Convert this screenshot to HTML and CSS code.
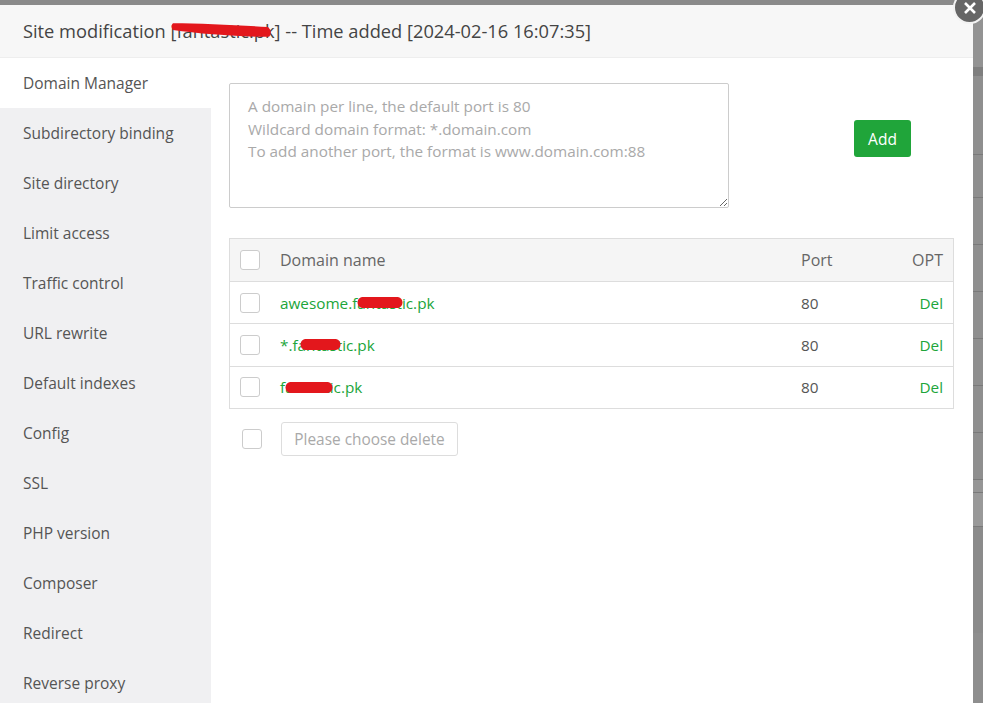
FILE: index.html
```html
<!DOCTYPE html>
<html lang="en">
<head>
<meta charset="utf-8">
<title>Site modification</title>
<link rel="stylesheet" href="styles.css">
</head>
<body>
<div class="page">
  <div class="topband"></div>
  <div class="stage">
    <main class="modal">
      <header class="modal-head">Site modification <span class="redact-wrap">[fantastic.pk]<svg class="scribble title-scribble" viewBox="0 0 104 14"><path d="M2 0 C30 0 70 2 100 4 Q105 9 101 14 C70 14 30 11 2 7 Q-1 3 2 0 Z"/></svg></span> -- Time added [2024-02-16 16:07:35]</header>
      <div class="modal-body">
        <nav class="side">
          <a class="side-item active">Domain Manager</a>
          <a class="side-item">Subdirectory binding</a>
          <a class="side-item">Site directory</a>
          <a class="side-item">Limit access</a>
          <a class="side-item">Traffic control</a>
          <a class="side-item">URL rewrite</a>
          <a class="side-item">Default indexes</a>
          <a class="side-item">Config</a>
          <a class="side-item">SSL</a>
          <a class="side-item">PHP version</a>
          <a class="side-item">Composer</a>
          <a class="side-item">Redirect</a>
          <a class="side-item">Reverse proxy</a>
        </nav>
        <section class="content">
          <div class="add-row">
            <textarea class="domains" placeholder="A domain per line, the default port is 80
Wildcard domain format: *.domain.com
To add another port, the format is www.domain.com:88"></textarea>
            <button class="btn-add">Add</button>
          </div>
          <div class="table">
            <div class="row head">
              <span class="cell-check"><i class="check"></i></span>
              <span class="cell-name">Domain name</span>
              <span class="cell-port">Port</span>
              <span class="cell-opt">OPT</span>
            </div>
            <div class="row">
              <span class="cell-check"><i class="check"></i></span>
              <span class="cell-name link"><span class="redact-wrap">awesome.fantastic.pk<svg class="scribble s1" viewBox="0 0 46 11"><path d="M5 0 H41 C47 1 47 10 41 11 H5 C-1 10 -1 1 5 0 Z"/></svg></span></span>
              <span class="cell-port">80</span>
              <span class="cell-opt link">Del</span>
            </div>
            <div class="row">
              <span class="cell-check"><i class="check"></i></span>
              <span class="cell-name link"><span class="redact-wrap">*.fantastic.pk<svg class="scribble s2" viewBox="0 0 41 11"><path d="M5 0 H36 C42 1 42 10 36 11 H5 C-1 10 -1 1 5 0 Z"/></svg></span></span>
              <span class="cell-port">80</span>
              <span class="cell-opt link">Del</span>
            </div>
            <div class="row">
              <span class="cell-check"><i class="check"></i></span>
              <span class="cell-name link"><span class="redact-wrap">fantastic.pk<svg class="scribble s3" viewBox="0 0 48 11"><path d="M5 0 H43 C49 1 49 10 43 11 H5 C-1 10 -1 1 5 0 Z"/></svg></span></span>
              <span class="cell-port">80</span>
              <span class="cell-opt link">Del</span>
            </div>
          </div>
          <div class="table-foot">
            <i class="check"></i>
            <button class="btn-del" disabled>Please choose delete</button>
          </div>
        </section>
      </div>
    </main>
    <aside class="backdrop">
      <div class="bd bd1"></div><div class="bd bd2"></div><div class="bd bd3"></div>
      <div class="bd bd4"></div><div class="bd bd5"></div><div class="bd bd5"></div>
      <div class="bd bd5"></div><div class="bd bd5"></div><div class="bd bd5"></div>
      <div class="bd bd5"></div><div class="bd bd6"></div><div class="bd bd7"></div>
      <div class="bd bd8"></div>
    </aside>
  </div>
  <button class="close" aria-label="Close"><svg viewBox="0 0 14 14"><path d="M2 2 L12 12 M12 2 L2 12"/></svg></button>
</div>
</body>
</html>
```

FILE: styles.css
```css
* { box-sizing: border-box; }
html, body { margin: 0; height: 100%; overflow: hidden; }
body { font-family: "Open Sans", "Noto Sans", sans-serif; color: #555; background: #8e8e8e; }
.page { position: relative; width: 983px; height: 703px; display: flex; flex-direction: column; overflow: hidden; }
.topband { height: 5px; background: #8a8a8a; flex: none; }
.stage { flex: 1; display: flex; min-height: 0; }
.modal { width: 973px; background: #fff; display: flex; flex-direction: column; flex: none; }
.modal-head { height: 53px; flex: none; padding-left: 23px; background: #f7f7f7; border-bottom: 1px solid #eee; font-size: 18.25px; line-height: 52px; color: #444; white-space: nowrap; }
.redact-wrap { position: relative; display: inline-block; }
.scribble { position: absolute; fill: #e3171c; }
.title-scribble { left: 1px; top: 18px; width: 101px; height: 14px; }
.s1 { left: 77px; top: 4px; width: 46px; height: 11px; }
.s2 { left: 20px; top: 4px; width: 41px; height: 11px; }
.s3 { left: 5px; top: 5px; width: 48px; height: 11px; }
.modal-body { flex: 1; display: flex; min-height: 0; }
.side { width: 211px; flex: none; background: #f0f0f2; }
.side-item { display: block; height: 50px; line-height: 51px; padding-left: 23px; font-size: 15.5px; color: #555; }
.side-item.active { background: #fff; }
.content { flex: 1; padding: 25px 19px 0 18px; }
.add-row { display: flex; align-items: flex-start; height: 125px; }
.domains { width: 500px; height: 125px; margin: 0; padding: 11px 18px; border: 1px solid #ccc; border-radius: 2px; font: 15.3px/22.5px "Open Sans", "Noto Sans", sans-serif; outline: none; }
.domains::placeholder { color: #a9a9a9; opacity: 1; }
.btn-add { margin: 37px 0 0 125px; width: 57px; height: 37px; padding: 0; background: #20a53a; border: 0; border-radius: 3px; color: #fff; font: 15.5px "Open Sans", "Noto Sans", sans-serif; }
.table { margin-top: 30px; width: 725px; border: 1px solid #ddd; }
.row { display: flex; align-items: center; height: 42.4px; border-top: 1px solid #ddd; font-size: 15.3px; }
.row.head { height: 42px; border-top: 0; background: #f5f5f5; font-size: 16px; color: #666; }
.cell-check { width: 50px; padding-left: 10px; display: flex; flex: none; }
.cell-name { width: 521px; flex: none; }
.cell-port { width: 80px; flex: none; }
.cell-opt { flex: 1; text-align: right; padding-right: 10px; }
.link { color: #20a53a; }
.check { display: block; width: 20px; height: 20px; flex: none; border: 1px solid #ccc; border-radius: 3px; background: #fff; }
.table-foot { display: flex; align-items: center; margin-top: 13px; padding-left: 13px; gap: 19px; }
.btn-del { width: 177px; height: 34px; padding: 0; background: #fff; border: 1px solid #ddd; border-radius: 3px; color: #a9a9a9; font: 15.4px "Open Sans", "Noto Sans", sans-serif; }
.backdrop { flex: 1; display: flex; flex-direction: column; }
.bd { flex: none; border-bottom: 1px solid #7a7a7a; background: #8f8f8f; }
.bd1 { height: 62px; background: #939393; border-bottom: 0; }
.bd2 { height: 9px; background: #7f7f7f; border-bottom: 0; }
.bd3 { height: 79px; }
.bd4 { height: 43px; }
.bd5 { height: 47px; }
.bd6 { height: 13px; background: #969696; }
.bd7 { height: 34px; background: #999; }
.bd8 { height: 106px; border-bottom: 0; background: #8b8b8b; }
.close { position: absolute; left: 953px; top: -9px; width: 33px; height: 33px; padding: 0; border: 2px solid #f2f2f2; border-radius: 50%; background: #666; display: flex; align-items: center; justify-content: center; }
.close svg { width: 14px; height: 14px; fill: none; stroke: #fff; stroke-width: 2.6; }
```
